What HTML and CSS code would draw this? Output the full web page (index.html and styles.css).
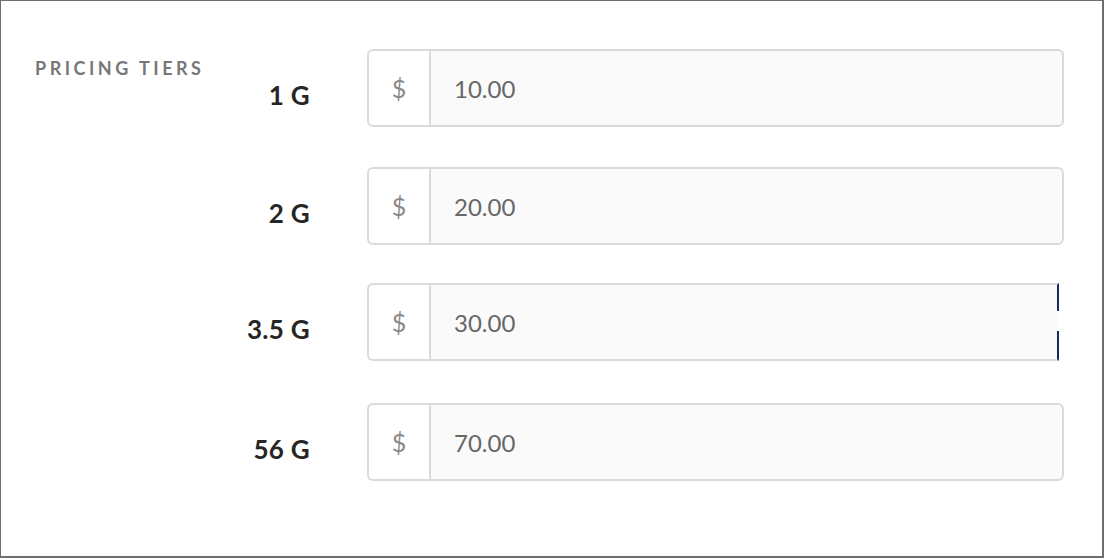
FILE: index.html
```html
<!DOCTYPE html>
<html lang="en">
<head>
<meta charset="utf-8">
<title>Pricing tiers</title>
<link rel="stylesheet" href="styles.css">
</head>
<body>
<div class="frame">
  <section class="pricing">
    <h2 class="pricing-title">Pricing Tiers</h2>
    <div class="tiers">
      <div class="tier">
        <label class="tier-label">1 G</label>
        <div class="money">
          <span class="money-prefix">$</span>
          <span class="money-input">10.00</span>
        </div>
      </div>
      <div class="tier">
        <label class="tier-label">2 G</label>
        <div class="money">
          <span class="money-prefix">$</span>
          <span class="money-input">20.00</span>
        </div>
      </div>
      <div class="tier">
        <label class="tier-label">3.5 G</label>
        <div class="money money-active">
          <span class="money-prefix">$</span>
          <span class="money-input">30.00</span>
        </div>
      </div>
      <div class="tier">
        <label class="tier-label">56 G</label>
        <div class="money">
          <span class="money-prefix">$</span>
          <span class="money-input">70.00</span>
        </div>
      </div>
    </div>
  </section>
</div>
</body>
</html>
```

FILE: styles.css
```css
* { box-sizing: border-box; }

html, body {
  margin: 0;
  padding: 0;
  background: #ffffff;
}

body {
  font-family: Lato, "Open Sans", "Liberation Sans", sans-serif;
}

.frame {
  width: 1104px;
  height: 558px;
  border: 1px solid #6e6e6e;
  border-right-width: 2px;
  border-bottom-width: 2px;
  background: #ffffff;
}

.pricing {
  display: flex;
  padding: 48px 0 0 34px;
}

.pricing-title {
  margin: 8px 0 0 0;
  width: 180px;
  font-size: 18px;
  font-weight: 700;
  letter-spacing: 3.5px;
  text-transform: uppercase;
  color: #777777;
  line-height: 22px;
  white-space: nowrap;
}

.tiers {
  display: flex;
  flex-direction: column;
}

.tier {
  display: flex;
  align-items: flex-start;
  gap: 57px;
  margin-bottom: 40px;
}

.tier:nth-child(2) { margin-bottom: 38px; }
.tier:nth-child(3) { margin-bottom: 42px; }

.tier-label {
  width: 95px;
  padding-top: 31px;
  text-align: right;
  font-size: 26px;
  font-weight: 700;
  letter-spacing: 0.3px;
  line-height: 31px;
  color: #262626;
}

.money {
  position: relative;
  display: flex;
  width: 697px;
  height: 78px;
}

.money-prefix {
  width: 62px;
  display: flex;
  align-items: center;
  justify-content: center;
  border: 2px solid #dadada;
  border-right: none;
  border-radius: 6px 0 0 6px;
  background: #ffffff;
  color: #8a8a8a;
  font-size: 25px;
}

.money-input {
  flex: 1;
  display: flex;
  align-items: center;
  padding-left: 23px;
  border: 2px solid #dadada;
  border-radius: 0 6px 6px 0;
  background: #fafafa;
  color: #676767;
  font-size: 24px;
}

.money-active {
  width: 692px;
}

.money-active .money-input {
  border-radius: 0;
  border-right: 2px solid #162a5c;
}

.money-active::after {
  content: "";
  position: absolute;
  right: 0;
  top: 28px;
  width: 2px;
  height: 20px;
  background: #ffffff;
}
```
